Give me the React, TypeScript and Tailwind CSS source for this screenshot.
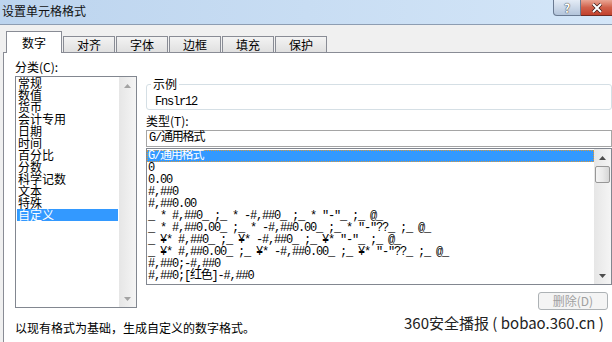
import React from 'react';

const mono = "font-['Liberation_Mono','Noto_Sans_CJK_SC',monospace] text-[12px] tracking-[-1.2px]";

const categories = ['常规', '数值', '货币', '会计专用', '日期', '时间', '百分比', '分数', '科学记数', '文本', '特殊', '自定义'];

const formats = [
  'G/通用格式',
  '0',
  '0.00',
  '#,##0',
  '#,##0.00',
  '_ * #,##0_ ;_ * -#,##0_ ;_ * "-"_ ;_ @_',
  '_ * #,##0.00_ ;_ * -#,##0.00_ ;_ * "-"??_ ;_ @_',
  '_ ¥* #,##0_ ;_ ¥* -#,##0_ ;_ ¥* "-"_ ;_ @_',
  '_ ¥* #,##0.00_ ;_ ¥* -#,##0.00_ ;_ ¥* "-"??_ ;_ @_',
  '#,##0;-#,##0',
  '#,##0;[红色]-#,##0',
];

const tabs = ['对齐', '字体', '边框', '填充', '保护'];

function Arrow({ up, color }: { up?: boolean; color: string }) {
  return (
    <svg width="7" height="4" viewBox="0 0 7 4">
      <path d={up ? 'M0 4 L3.5 0 L7 4 Z' : 'M0 0 L3.5 4 L7 0 Z'} fill={color} />
    </svg>
  );
}

function ScrollBar({ thumb }: { thumb?: boolean }) {
  const color = thumb ? '#4d4d4d' : '#a3a3a3';
  return (
    <div className="w-[17px] flex flex-col bg-linear-to-r from-[#e6e6e6] to-[#f5f5f5]">
      <div className="h-[17px] flex items-center justify-center">
        <Arrow up color={color} />
      </div>
      <div className="flex-1 flex flex-col">
        {thumb && (
          <div className="h-[17px] mx-px rounded-[2px] border border-[#979797] bg-linear-to-r from-[#f4f4f4] via-[#eaeaea] to-[#d6d6d6]" />
        )}
      </div>
      <div className="h-[17px] flex items-center justify-center">
        <Arrow color={color} />
      </div>
    </div>
  );
}

export default function App() {
  return (
    <div className="relative w-[612px] h-[342px] overflow-hidden bg-[#f0f0f0] text-black text-[12px] font-['Noto_Sans_CJK_SC',sans-serif] flex flex-col">
      {/* title bar */}
      <div className="h-[25px] flex items-start border-b border-[#8d9db2] bg-linear-to-r from-[#bcd4ee] to-[#d4e6f8]">
        <span className="ml-[2px] mt-[4px] leading-[14px] text-[#111]">设置单元格格式</span>
        <div className="ml-auto flex">
          <div className="w-[28px] h-[16px] rounded-bl-[4px] border border-t-0 border-[#6a7a91] bg-linear-to-b from-[#e4ecf6] to-[#b3c4da] flex items-center justify-center">
            <span className="text-[12px] leading-[12px] font-bold text-white [text-shadow:0_0_1px_#333,0_0_1px_#333]">?</span>
          </div>
          <div className="w-[31px] h-[16px] border-b border-[#6d2a22] bg-linear-to-b from-[#e9a594] via-[#d0604a] to-[#c2412d] flex items-center justify-center">
            <svg width="12" height="10" viewBox="0 0 12 10">
              <path d="M2 1 L10 9 M10 1 L2 9" stroke="#3a1a16" strokeWidth="3.4" />
              <path d="M2 1 L10 9 M10 1 L2 9" stroke="#ffffff" strokeWidth="2" />
            </svg>
          </div>
        </div>
      </div>

      {/* tabs */}
      <div className="h-[27px] flex items-end pl-[6px] gap-[1px]">
        <div className="relative z-10 -mb-px w-[56px] h-[22px] border border-b-0 border-[#898c95] bg-white flex justify-center pt-[4px] leading-[14px]">
          数字
        </div>
        {tabs.map((t) => (
          <div
            key={t}
            className="w-[52px] h-[16px] border border-b-0 border-[#898c95] bg-linear-to-b from-[#f3f3f3] to-[#e0e0e0] flex justify-center leading-[15px]"
          >
            {t}
          </div>
        ))}
      </div>

      {/* panel */}
      <div className="flex-1 ml-[3px] border-t border-l border-[#898c95] bg-white pl-[11px] flex flex-col">
        <div className="flex">
          {/* category */}
          <div className="w-[122px] flex flex-col">
            <div className="mt-[7px] h-[14px] leading-[14px]">分类(C):</div>
            <div className="mt-[2px] h-[232px] border border-[#828790] flex">
              <div className="flex-1 px-px">
                {categories.map((c) => (
                  <div
                    key={c}
                    className={
                      c === '自定义'
                        ? 'h-[12px] leading-[12px] pl-px bg-[#3399ff] text-white'
                        : 'h-[12px] leading-[12px] pl-px'
                    }
                  >
                    {c}
                  </div>
                ))}
              </div>
              <ScrollBar />
            </div>
          </div>

          {/* right column */}
          <div className="ml-[9px] w-[466px] flex flex-col">
            <fieldset className="mt-[24px] h-[33px] border border-[#d5dfe5] rounded-[3px]">
              <legend className="ml-[4px] px-[2px] leading-[14px]">示例</legend>
              <div className={mono + ' leading-[14px] mt-[4px] pl-[8px]'}>Fnslr12</div>
            </fieldset>
            <div className="mt-[4px] h-[14px] leading-[14px]">类型(T):</div>
            <div className={mono + ' mt-[2px] h-[17px] border border-[#a5a5a5] pl-[2px] leading-[15px]'}>G/通用格式</div>
            <div className="mt-px h-[137px] border border-[#828790] flex">
              <div className={mono + ' flex-1 pt-px whitespace-pre overflow-hidden'}>
                {formats.map((f, i) => (
                  <div
                    key={i}
                    className={
                      i === 0
                        ? 'h-[12px] leading-[11px] bg-[#3399ff] text-white border border-dotted border-[#d99a3c]'
                        : 'h-[12px] leading-[12px] pl-px'
                    }
                  >
                    {f}
                  </div>
                ))}
              </div>
              <ScrollBar thumb />
            </div>
            <div className="self-end mr-[4px] mt-[7px] w-[70px] h-[18px] rounded-[3px] border border-[#adb2b5] bg-[#f4f4f4] text-[#a0a0a0] flex items-center justify-center leading-[14px]">
              删除(D)
            </div>
          </div>
        </div>

        <div className="mt-[10px] leading-[16px]">以现有格式为基础，生成自定义的数字格式。</div>
      </div>

      {/* watermark */}
      <div className="absolute left-[404px] top-[313px] text-[15px] leading-[20px] text-[#222] font-normal">
        360安全播报 ( bobao.360.cn )
      </div>
    </div>
  );
}
